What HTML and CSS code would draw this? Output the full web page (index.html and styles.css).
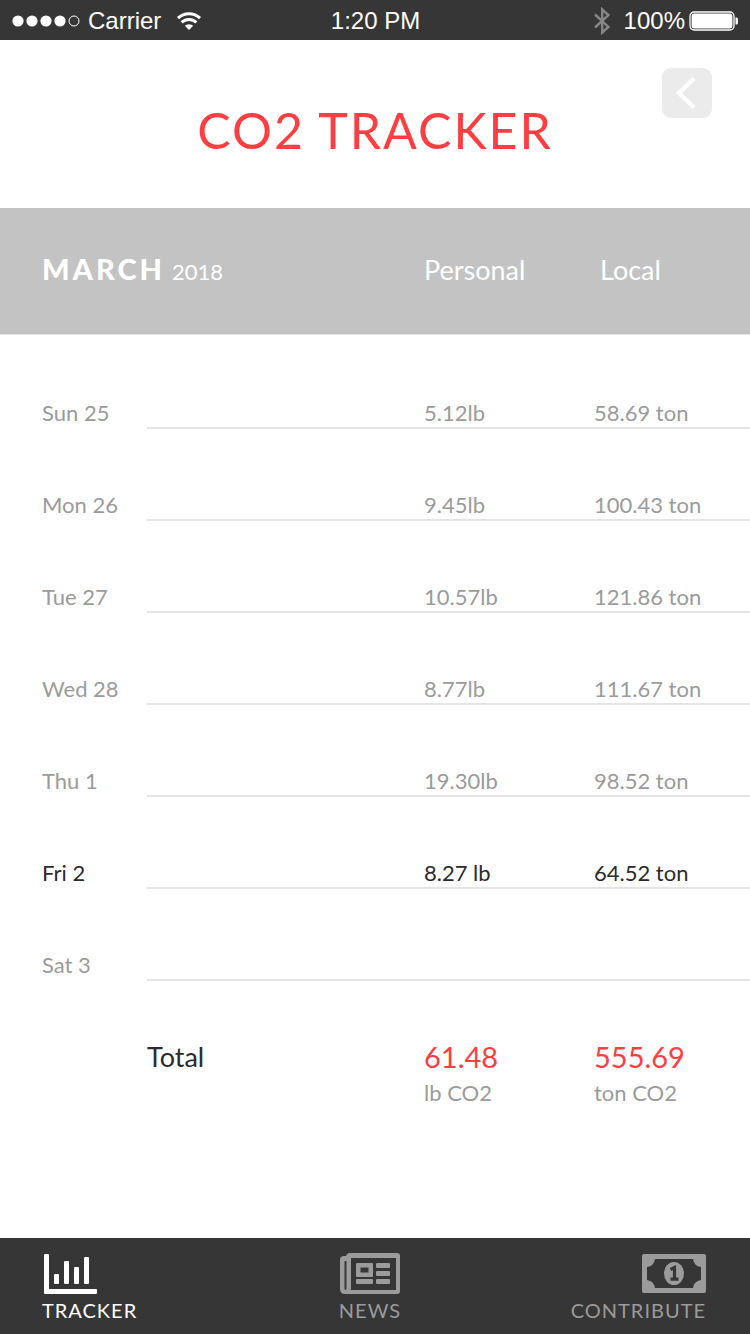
FILE: index.html
```html
<!DOCTYPE html>
<html lang="en">
<head>
    <meta charset="UTF-8">
    <meta name="viewport" content="width=device-width, initial-scale=1.0">
    <title>CO2 Tracker</title>
    <link rel="stylesheet" href="styles.css">
</head>
<body>
    <div class="status-bar">
        <div class="status-left">
            <svg width="68" height="12" viewBox="0 0 68 12" fill="#fff">
                <circle cx="6" cy="6" r="5.6"/>
                <circle cx="20" cy="6" r="5.6"/>
                <circle cx="34" cy="6" r="5.6"/>
                <circle cx="48" cy="6" r="5.6"/>
                <circle cx="62" cy="6" r="5" fill="none" stroke="#fff"/>
            </svg>
            <span class="carrier">Carrier</span>
            <svg width="24" height="18" viewBox="0 0 24 18" fill="none" stroke="#fff" stroke-width="3">
                <path d="M1 6.2a16 16 0 0 1 22 0"/>
                <path d="M4.6 10.4a10.8 10.8 0 0 1 14.8 0"/>
                <path d="M12 18l-4.2-4.2a6.2 6.2 0 0 1 8.4 0z" fill="#fff" stroke="none"/>
            </svg>
        </div>
        <span class="time">1:20 PM</span>
        <div class="status-right">
            <svg class="bluetooth" width="16" height="28" viewBox="0 0 16 28" fill="none" stroke="#868686" stroke-width="2.4">
                <path d="M1 7.5l13.4 12.4L8.2 25.5V2.5l6.2 5.6L1 20.5"/>
            </svg>
            <span>100%</span>
            <svg class="battery" width="50" height="20" viewBox="0 0 50 20">
                <rect x="1" y="1" width="44" height="18" rx="4" fill="none" stroke="#fff" stroke-width="1.3"/>
                <rect x="2.6" y="2.6" width="40.8" height="14.8" rx="2.5" fill="#fff"/>
                <path d="M46.5 6.500h1q1.500 0 1.500 1.500v4q0 1.500-1.500 1.500h-1z" fill="#fff"/>
            </svg>
        </div>
    </div>

    <header class="header">
        <h1>CO2 TRACKER</h1>
        <button class="back" type="button" aria-label="Back">
            <svg width="50" height="50" viewBox="0 0 50 50" fill="none" stroke="#fff" stroke-width="4.5">
                <path d="M32 10.500L17 25l15 14.500"/>
            </svg>
        </button>
    </header>

    <main>
        <table class="tracker">
            <colgroup>
                <col class="col-day">
                <col>
                <col class="col-personal">
                <col class="col-local">
            </colgroup>
            <thead>
                <tr>
                    <th class="month" colspan="2"><strong>MARCH</strong> <span>2018</span></th>
                    <th>Personal</th>
                    <th class="local">Local</th>
                </tr>
            </thead>
            <tbody>
                <tr><th>Sun 25</th><td></td><td>5.12lb</td><td>58.69 ton</td></tr>
                <tr><th>Mon 26</th><td></td><td>9.45lb</td><td>100.43 ton</td></tr>
                <tr><th>Tue 27</th><td></td><td>10.57lb</td><td>121.86 ton</td></tr>
                <tr><th>Wed 28</th><td></td><td>8.77lb</td><td>111.67 ton</td></tr>
                <tr><th>Thu 1</th><td></td><td>19.30lb</td><td>98.52 ton</td></tr>
                <tr class="today"><th>Fri 2</th><td></td><td>8.27 lb</td><td>64.52 ton</td></tr>
                <tr><th>Sat 3</th><td></td><td></td><td></td></tr>
            </tbody>
            <tfoot>
                <tr>
                    <td></td>
                    <th>Total</th>
                    <td><span class="sum">61.48</span><span class="unit">lb CO2</span></td>
                    <td><span class="sum">555.69</span><span class="unit">ton CO2</span></td>
                </tr>
            </tfoot>
        </table>
    </main>

    <nav class="tab-bar">
        <a class="tab active" href="#tracker">
            <svg width="54" height="42" viewBox="0 0 54 42" fill="currentColor">
                <path d="M1 0h3q1 0 1 1v34h47q1 0 1 1v3q0 1-1 1H1q-1 0-1-1V1q0-1 1-1z"/>
                <rect x="10" y="20" width="5" height="10" rx="1"/>
                <rect x="20" y="7" width="5" height="23" rx="1"/>
                <rect x="30" y="13" width="5" height="17" rx="1"/>
                <rect x="40" y="3" width="5" height="27" rx="1"/>
            </svg>
            <span>TRACKER</span>
        </a>
        <a class="tab" href="#news">
            <svg width="62" height="42" viewBox="0 0 62 42" fill="currentColor">
                <path fill-rule="evenodd" d="M11-1h47q3 0 3 3v35q0 3-3 3H6q-5 0-5-5V6q0-4 4-4h2q1-3 4-3zM12 4v30q0 1-.5 2H57V4zM5.500 7v27q0 2 1 2t1-2V7z"/>
                <path fill-rule="evenodd" d="M18 9h15q1 0 1 1v12q0 1-1 1H18q-1 0-1-1V10q0-1 1-1zM21.500 13.500v5h8v-5z"/>
                <rect x="37" y="9" width="14" height="5" rx="1"/>
                <rect x="37" y="17" width="14" height="5" rx="1"/>
                <rect x="37" y="25" width="14" height="5" rx="1"/>
                <rect x="17" y="25" width="17" height="5" rx="1"/>
            </svg>
            <span>NEWS</span>
        </a>
        <a class="tab" href="#contribute">
            <svg width="64" height="42" viewBox="0 0 64 42" fill="currentColor">
                <path fill-rule="evenodd" d="M2 0h60q2 0 2 2v35q0 2-2 2H2q-2 0-2-2V2q0-2 2-2zM13 5q-1 7-8 8v13q7 1 8 8h38q1-7 8-8V13q-7-1-8-8z"/>
                <ellipse cx="32" cy="19.5" rx="10" ry="11.5"/>
                <path d="M28.500 15.500l4-2v11.500M28.500 25.200h8" fill="none" stroke="#363636" stroke-width="3.2"/>
            </svg>
            <span>CONTRIBUTE</span>
        </a>
    </nav>
</body>
</html>
```
FILE: styles.css
```css
* {
    box-sizing: border-box;
}

body {
    margin: 0;
    min-height: 100vh;
    display: flex;
    flex-direction: column;
    background-color: #fff;
    color: #9b9b9b;
    font-family: Futura, "Futura PT", Lato, sans-serif;
    font-size: 22px;
}

svg {
    display: block;
    overflow: visible;
}

/* status bar */
.status-bar {
    display: grid;
    grid-template-columns: 1fr auto 1fr;
    align-items: center;
    height: 40px;
    padding: 1px 11px 0 12px;
    background-color: #363636;
    color: #fff;
    font-family: "Helvetica Neue", "Liberation Sans", sans-serif;
    font-size: 24px;
}

.status-left,
.status-right {
    display: flex;
    align-items: center;
}

.status-right {
    justify-content: flex-end;
}

.carrier {
    margin: 0 16px 0 8px;
}

.bluetooth {
    margin-right: 14px;
}

.battery {
    margin-left: 4px;
}

/* title */
.header {
    display: grid;
    grid-template-columns: 1fr auto 1fr;
    height: 168px;
    padding: 28px 38px 0;
}

h1 {
    grid-column: 2;
    margin: 32px 0 0;
    color: #ff3e41;
    font-size: 50px;
    font-weight: 400;
    line-height: 60px;
    letter-spacing: 2px;
}

.back {
    justify-self: end;
    width: 50px;
    height: 50px;
    padding: 0;
    border: none;
    border-radius: 9px;
    background-color: #ebebeb;
    cursor: pointer;
}

/* table */
.tracker {
    width: 100%;
    table-layout: fixed;
    border-collapse: separate;
    border-spacing: 0;
    line-height: 28px;
}

.col-day {
    width: 147px;
}

.col-personal {
    width: 170px;
}

.col-local {
    width: 156px;
}

th,
td {
    padding: 0;
    font-weight: 400;
    text-align: left;
    white-space: nowrap;
}

thead th {
    height: 127px;
    padding-bottom: 2px;
    border-bottom: 1px solid #e4e4e4;
    background-color: #c3c3c3;
    color: #fff;
    font-size: 27px;
}

thead .local {
    padding-left: 6px;
}

.month strong {
    font-size: 29px;
    font-weight: 900;
    letter-spacing: 3px;
}

.month span {
    font-size: 22px;
}

thead .month,
tbody th {
    padding-left: 42px;
}

tbody th,
tbody td {
    height: 92px;
    vertical-align: bottom;
    border-bottom: 2px solid #e4e4e4;
}

tbody th {
    border-bottom-color: transparent;
}

tbody tr:first-child th {
    height: 94px;
}

.today {
    color: #2b2b2b;
}

tfoot th,
tfoot td {
    padding-top: 58px;
    vertical-align: top;
}

tfoot th,
.sum {
    font-size: 29px;
    line-height: 36px;
}

tfoot th {
    color: #2b2b2b;
    font-size: 27px;
}

.sum,
.unit {
    display: block;
}

.sum {
    color: #ff3e41;
}

.unit {
    line-height: 36px;
}

/* bottom navigation */
.tab-bar {
    display: grid;
    grid-template-columns: 37fr auto 38fr;
    height: 96px;
    margin-top: auto;
    padding: 16px 44px 0 42px;
    background-color: #363636;
}

.tab {
    display: flex;
    flex-direction: column;
    align-items: center;
    color: #9b9b9b;
    font-size: 20px;
    line-height: 28px;
    letter-spacing: 1px;
    text-decoration: none;
}

.tab:first-child {
    align-items: flex-start;
}

.tab:first-child svg {
    margin-left: 2px;
}

.tab:last-child {
    align-items: flex-end;
}

.tab.active {
    color: #fff;
}
```
